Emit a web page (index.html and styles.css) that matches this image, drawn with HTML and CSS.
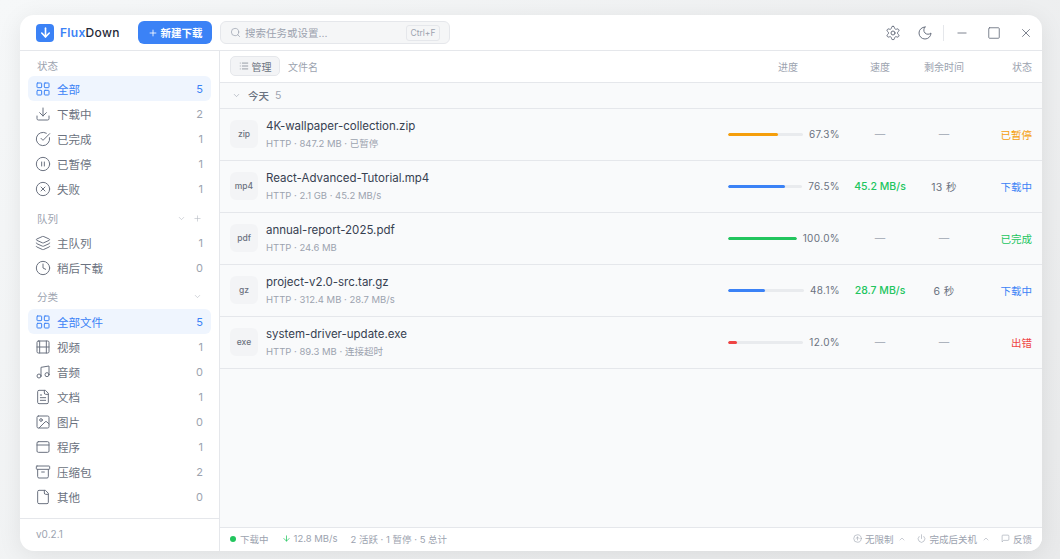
FILE: index.html
```html
<!DOCTYPE html>
<html lang="zh-CN">
<head>
    <meta charset="UTF-8">
    <title>FluxDown</title>
    <link rel="stylesheet" href="styles.css">
</head>
<body>
<svg class="defs" width="0" height="0">
    <symbol id="i-grid" viewBox="0 0 24 24"><rect x="3" y="3" width="7" height="7" rx="1"/><rect x="14" y="3" width="7" height="7" rx="1"/><rect x="14" y="14" width="7" height="7" rx="1"/><rect x="3" y="14" width="7" height="7" rx="1"/></symbol>
    <symbol id="i-down" viewBox="0 0 24 24"><path d="M21 15v4a2 2 0 0 1-2 2H5a2 2 0 0 1-2-2v-4"/><path d="M7 10l5 5 5-5"/><path d="M12 15V3"/></symbol>
    <symbol id="i-check" viewBox="0 0 24 24"><path d="M21.8 10A10 10 0 1 1 17 3.3"/><path d="M9 11l3 3L22 4"/></symbol>
    <symbol id="i-pause" viewBox="0 0 24 24"><circle cx="12" cy="12" r="10"/><path d="M10 15V9"/><path d="M14 15V9"/></symbol>
    <symbol id="i-x" viewBox="0 0 24 24"><circle cx="12" cy="12" r="10"/><path d="M15 9l-6 6"/><path d="M9 9l6 6"/></symbol>
    <symbol id="i-layers" viewBox="0 0 24 24"><path d="M12.8 2.2a2 2 0 0 0-1.6 0L2.6 6.1a1 1 0 0 0 0 1.8l8.6 3.9a2 2 0 0 0 1.6 0l8.6-3.9a1 1 0 0 0 0-1.8z"/><path d="M2 12a1 1 0 0 0 .6.9l8.6 3.9a2 2 0 0 0 1.6 0l8.6-3.9a1 1 0 0 0 .6-.9"/><path d="M2 17a1 1 0 0 0 .6.9l8.6 3.9a2 2 0 0 0 1.6 0l8.6-3.9a1 1 0 0 0 .6-.9"/></symbol>
    <symbol id="i-clock" viewBox="0 0 24 24"><circle cx="12" cy="12" r="10"/><path d="M12 6v6l4 2"/></symbol>
    <symbol id="i-film" viewBox="0 0 24 24"><rect x="3" y="3" width="18" height="18" rx="2"/><path d="M7 3v18"/><path d="M3 12h18"/><path d="M17 3v18"/></symbol>
    <symbol id="i-music" viewBox="0 0 24 24"><path d="M9 18V5l12-2v13"/><circle cx="6" cy="18" r="3"/><circle cx="18" cy="16" r="3"/></symbol>
    <symbol id="i-doc" viewBox="0 0 24 24"><path d="M15 2H6a2 2 0 0 0-2 2v16a2 2 0 0 0 2 2h12a2 2 0 0 0 2-2V7z"/><path d="M14 2v4a2 2 0 0 0 2 2h4"/><path d="M16 13H8"/><path d="M16 17H8"/><path d="M10 9H8"/></symbol>
    <symbol id="i-image" viewBox="0 0 24 24"><rect x="3" y="3" width="18" height="18" rx="2"/><circle cx="9" cy="9" r="2"/><path d="M21 15l-3.1-3.1a2 2 0 0 0-2.8 0L6 21"/></symbol>
    <symbol id="i-app" viewBox="0 0 24 24"><rect x="3" y="4" width="18" height="16" rx="2"/><path d="M3 9h18"/></symbol>
    <symbol id="i-archive" viewBox="0 0 24 24"><rect x="2" y="3" width="20" height="5" rx="1"/><path d="M4 8v11a2 2 0 0 0 2 2h12a2 2 0 0 0 2-2V8"/><path d="M10 12h4"/></symbol>
    <symbol id="i-file" viewBox="0 0 24 24"><path d="M15 2H6a2 2 0 0 0-2 2v16a2 2 0 0 0 2 2h12a2 2 0 0 0 2-2V7z"/><path d="M14 2v4a2 2 0 0 0 2 2h4"/></symbol>
    <symbol id="i-chev" viewBox="0 0 24 24"><path d="M6 9l6 6 6-6"/></symbol>
    <symbol id="i-chev-up" viewBox="0 0 24 24"><path d="M18 15l-6-6-6 6"/></symbol>
    <symbol id="i-plus" viewBox="0 0 24 24"><path d="M5 12h14"/><path d="M12 5v14"/></symbol>
</svg>

<div class="window">
    <header class="titlebar">
        <div class="logo">
            <span class="logo-mark"><svg class="ic" viewBox="0 0 24 24"><path d="M12 4v16"/><path d="M5 13l7 7 7-7"/></svg></span>
            <span class="logo-text"><b>Flux</b>Down</span>
        </div>
        <button class="new-btn"><svg class="ic"><use href="#i-plus"/></svg>新建下载</button>
        <div class="search">
            <svg class="ic" viewBox="0 0 24 24"><circle cx="11" cy="11" r="8"/><path d="M21 21l-4.3-4.3"/></svg>
            <span class="search-text">搜索任务或设置...</span>
            <span class="kbd">Ctrl+F</span>
        </div>
        <div class="win-tools">
            <svg class="ic tool" viewBox="0 0 24 24"><path d="M12.2 2h-.4a2 2 0 0 0-2 2v.2a2 2 0 0 1-1 1.7l-.4.3a2 2 0 0 1-2 0l-.2-.1a2 2 0 0 0-2.7.7l-.2.4a2 2 0 0 0 .7 2.7l.2.1a2 2 0 0 1 1 1.7v.5a2 2 0 0 1-1 1.8l-.2.1a2 2 0 0 0-.7 2.7l.2.4a2 2 0 0 0 2.7.7l.2-.1a2 2 0 0 1 2 0l.4.3a2 2 0 0 1 1 1.7v.2a2 2 0 0 0 2 2h.4a2 2 0 0 0 2-2v-.2a2 2 0 0 1 1-1.7l.4-.3a2 2 0 0 1 2 0l.2.1a2 2 0 0 0 2.7-.7l.2-.4a2 2 0 0 0-.7-2.7l-.2-.1a2 2 0 0 1-1-1.8v-.5a2 2 0 0 1 1-1.7l.2-.1a2 2 0 0 0 .7-2.7l-.2-.4a2 2 0 0 0-2.7-.7l-.2.1a2 2 0 0 1-2 0l-.4-.3a2 2 0 0 1-1-1.7V4a2 2 0 0 0-2-2z"/><circle cx="12" cy="12" r="3"/></svg>
            <svg class="ic tool" viewBox="0 0 24 24"><path d="M12 3a6 6 0 0 0 9 9 9 9 0 1 1-9-9z"/></svg>
            <span class="tool-sep"></span>
            <svg class="ic tool-win" viewBox="0 0 24 24"><path d="M5 12h14"/></svg>
            <svg class="ic tool-win" viewBox="0 0 24 24"><rect x="3" y="3" width="18" height="18" rx="1.5"/></svg>
            <svg class="ic tool-win" viewBox="0 0 24 24"><path d="M18 6L6 18"/><path d="M6 6l12 12"/></svg>
        </div>
    </header>

    <div class="body">
        <aside class="sidebar">
            <div class="side-scroll">
                <div class="side-title">状态</div>
                <a class="side-item active"><svg class="ic"><use href="#i-grid"/></svg><span>全部</span><em>5</em></a>
                <a class="side-item"><svg class="ic"><use href="#i-down"/></svg><span>下载中</span><em>2</em></a>
                <a class="side-item"><svg class="ic"><use href="#i-check"/></svg><span>已完成</span><em>1</em></a>
                <a class="side-item"><svg class="ic"><use href="#i-pause"/></svg><span>已暂停</span><em>1</em></a>
                <a class="side-item"><svg class="ic"><use href="#i-x"/></svg><span>失败</span><em>1</em></a>

                <div class="side-title mid">队列<svg class="ic mini"><use href="#i-chev"/></svg><svg class="ic mini"><use href="#i-plus"/></svg></div>
                <a class="side-item"><svg class="ic"><use href="#i-layers"/></svg><span>主队列</span><em>1</em></a>
                <a class="side-item"><svg class="ic"><use href="#i-clock"/></svg><span>稍后下载</span><em>0</em></a>

                <div class="side-title mid low">分类<svg class="ic mini"><use href="#i-chev"/></svg></div>
                <a class="side-item active"><svg class="ic"><use href="#i-grid"/></svg><span>全部文件</span><em>5</em></a>
                <a class="side-item"><svg class="ic"><use href="#i-film"/></svg><span>视频</span><em>1</em></a>
                <a class="side-item"><svg class="ic"><use href="#i-music"/></svg><span>音频</span><em>0</em></a>
                <a class="side-item"><svg class="ic"><use href="#i-doc"/></svg><span>文档</span><em>1</em></a>
                <a class="side-item"><svg class="ic"><use href="#i-image"/></svg><span>图片</span><em>0</em></a>
                <a class="side-item"><svg class="ic"><use href="#i-app"/></svg><span>程序</span><em>1</em></a>
                <a class="side-item"><svg class="ic"><use href="#i-archive"/></svg><span>压缩包</span><em>2</em></a>
                <a class="side-item"><svg class="ic"><use href="#i-file"/></svg><span>其他</span><em>0</em></a>
            </div>
            <div class="side-foot">v0.2.1</div>
        </aside>

        <main class="main">
            <div class="col-head grid">
                <div class="col-name">
                    <button class="manage"><svg class="ic" viewBox="0 0 24 24"><path d="M3 5h.01"/><path d="M3 12h.01"/><path d="M3 19h.01"/><path d="M8 5h13"/><path d="M8 12h13"/><path d="M8 19h13"/></svg>管理</button>
                    <span>文件名</span>
                </div>
                <div class="center">进度</div>
                <div class="center">速度</div>
                <div class="center">剩余时间</div>
                <div class="right">状态</div>
            </div>

            <div class="group"><svg class="ic"><use href="#i-chev"/></svg><b>今天</b><span>5</span></div>

            <div class="row grid">
                <div class="file"><span class="ext">zip</span><div><div class="fname">4K-wallpaper-collection.zip</div><div class="fmeta">HTTP · 847.2 MB · 已暂停</div></div></div>
                <div class="prog"><div class="bar"><i class="amber" style="width:67.3%"></i></div><span>67.3%</span></div>
                <div class="center dash">—</div>
                <div class="center dash">—</div>
                <div class="right st amber-t">已暂停</div>
            </div>
            <div class="row grid">
                <div class="file"><span class="ext">mp4</span><div><div class="fname">React-Advanced-Tutorial.mp4</div><div class="fmeta">HTTP · 2.1 GB · 45.2 MB/s</div></div></div>
                <div class="prog"><div class="bar"><i class="blue" style="width:76.5%"></i></div><span>76.5%</span></div>
                <div class="center speed">45.2 MB/s</div>
                <div class="center eta">13 秒</div>
                <div class="right st blue-t">下载中</div>
            </div>
            <div class="row grid">
                <div class="file"><span class="ext">pdf</span><div><div class="fname">annual-report-2025.pdf</div><div class="fmeta">HTTP · 24.6 MB</div></div></div>
                <div class="prog"><div class="bar"><i class="green" style="width:100%"></i></div><span>100.0%</span></div>
                <div class="center dash">—</div>
                <div class="center dash">—</div>
                <div class="right st green-t">已完成</div>
            </div>
            <div class="row grid">
                <div class="file"><span class="ext">gz</span><div><div class="fname">project-v2.0-src.tar.gz</div><div class="fmeta">HTTP · 312.4 MB · 28.7 MB/s</div></div></div>
                <div class="prog"><div class="bar"><i class="blue" style="width:48.1%"></i></div><span>48.1%</span></div>
                <div class="center speed">28.7 MB/s</div>
                <div class="center eta">6 秒</div>
                <div class="right st blue-t">下载中</div>
            </div>
            <div class="row grid">
                <div class="file"><span class="ext">exe</span><div><div class="fname">system-driver-update.exe</div><div class="fmeta">HTTP · 89.3 MB · 连接超时</div></div></div>
                <div class="prog"><div class="bar"><i class="red" style="width:12%"></i></div><span>12.0%</span></div>
                <div class="center dash">—</div>
                <div class="center dash">—</div>
                <div class="right st red-t">出错</div>
            </div>

            <footer class="statusbar">
                <span class="dot"></span><span class="sb-state">下载中</span>
                <svg class="ic sb-arrow" viewBox="0 0 24 24"><path d="M12 5v14"/><path d="M19 12l-7 7-7-7"/></svg><span class="sb-speed">12.8 MB/s</span>
                <span class="sb-sum">2 活跃 · 1 暂停 · 5 总计</span>
                <div class="sb-right">
                    <span><svg class="ic" viewBox="0 0 24 24"><circle cx="12" cy="12" r="10"/><path d="M16 12l-4-4-4 4"/><path d="M12 16V8"/></svg>无限制<svg class="ic up"><use href="#i-chev-up"/></svg></span>
                    <span><svg class="ic" viewBox="0 0 24 24"><path d="M12 2v10"/><path d="M18.4 6.6a9 9 0 1 1-12.8 0"/></svg>完成后关机<svg class="ic up"><use href="#i-chev-up"/></svg></span>
                    <span><svg class="ic" viewBox="0 0 24 24"><path d="M21 15a2 2 0 0 1-2 2H7l-4 4V5a2 2 0 0 1 2-2h14a2 2 0 0 1 2 2z"/></svg>反馈</span>
                </div>
            </footer>
        </main>
    </div>
</div>
</body>
</html>
```

FILE: styles.css
```css
* { box-sizing: border-box; }

html, body { height: 100%; }

body {
    margin: 0;
    padding: 15px 18px 8px 20px;
    overflow: hidden;
    background: linear-gradient(135deg, #f6f8f9, #e9eaeb);
    font-family: Inter, "Noto Sans CJK SC", sans-serif;
    color: #374151;
}

.defs { position: absolute; }

.ic {
    width: 14px;
    height: 14px;
    flex: none;
    fill: none;
    stroke: currentColor;
    stroke-width: 2;
    stroke-linecap: round;
    stroke-linejoin: round;
}

.window {
    height: 536px;
    display: flex;
    flex-direction: column;
    background: #fff;
    border-radius: 14px;
    overflow: hidden;
    box-shadow: 0 4px 24px rgba(0, 0, 0, 0.08);
}

/* title bar */
.titlebar {
    height: 36px;
    flex: none;
    display: flex;
    align-items: center;
    padding: 0 9px 0 16px;
    border-bottom: 1px solid #e5e7eb;
}
.logo { display: flex; align-items: center; gap: 6px; width: 102px; }
.logo-mark {
    width: 18px;
    height: 18px;
    border-radius: 4px;
    background: #3b82f6;
    color: #fff;
    display: flex;
    align-items: center;
    justify-content: center;
}
.logo-mark .ic { width: 13px; height: 13px; stroke-width: 3; }
.logo-text { font-size: 12px; font-weight: 500; color: #1f2937; letter-spacing: 0.3px; }
.logo-text b { font-weight: 600; color: #3b82f6; }

.new-btn {
    width: 74px;
    height: 23px;
    border: none;
    border-radius: 6px;
    background: #3b82f6;
    color: #fff;
    font: 600 10.5px Inter, "Noto Sans CJK SC", sans-serif;
    display: flex;
    align-items: center;
    justify-content: center;
    gap: 3px;
    padding: 0;
}
.new-btn .ic { width: 10px; height: 10px; }

.search {
    width: 230px;
    height: 23px;
    margin-left: 8px;
    display: flex;
    align-items: center;
    padding: 0 9px;
    background: #f5f6f7;
    border: 1px solid #e5e7eb;
    border-radius: 6px;
    color: #9ca3af;
}
.search > .ic { width: 11px; height: 11px; stroke-width: 1.6; }
.search-text { flex: 1; margin-left: 4px; font-size: 10.5px; }
.kbd {
    width: 34px;
    height: 16px;
    border: 1px solid #e5e7eb;
    border-radius: 3px;
    font-size: 8.5px;
    text-align: center;
    line-height: 14px;
}

.win-tools { margin-left: auto; display: flex; align-items: center; color: #6b7280; }
.tool { width: 16px; height: 16px; stroke-width: 1.5; margin-right: 16px; }
.tool + .tool { margin-right: 10px; }
.tool-sep { width: 1px; height: 16px; background: #e5e7eb; margin-right: 11px; }
.tool-win { width: 14px; height: 14px; stroke-width: 1.5; margin-right: 18px; }
.tool-win:last-child { margin-right: 0; }

.body { flex: 1; min-height: 0; display: flex; }

/* sidebar */
.sidebar {
    width: 200px;
    flex: none;
    display: flex;
    flex-direction: column;
    border-right: 1px solid #e5e7eb;
}
.side-scroll { flex: 1; padding: 6px 8px 0; }
.side-title {
    height: 16px;
    padding: 0 9px;
    margin-bottom: 3px;
    display: flex;
    align-items: center;
    gap: 7px;
    font-size: 10.5px;
    color: #9ca3af;
}
.side-title.mid { margin-top: 9px; margin-bottom: 4px; }
.side-title.low { margin-top: 8px; margin-bottom: 5px; }
.side-title .mini { width: 9px; height: 9px; stroke-width: 1.6; color: #b6bbc3; }
.side-title .mini:first-of-type { margin-left: auto; }
.side-title .mini + .mini { margin-left: 0; }

.side-item {
    height: 25px;
    padding: 0 8px 0 7px;
    display: flex;
    align-items: center;
    border-radius: 6px;
    font-size: 11.5px;
    color: #6b7280;
}
.side-item .ic { width: 16px; height: 16px; stroke-width: 1.5; }
.side-item span { flex: 1; margin-left: 6px; }
.side-item em { font-style: normal; font-size: 11px; color: #9ca3af; }
.side-item.active { background: #eff5fe; color: #3b82f6; }
.side-item.active em { color: #3b82f6; }

.side-foot {
    height: 33px;
    flex: none;
    padding-left: 16px;
    border-top: 1px solid #e5e7eb;
    font-size: 10px;
    line-height: 30px;
    color: #9ca3af;
}

/* file list */
.main {
    flex: 1;
    min-width: 0;
    display: flex;
    flex-direction: column;
    background: #f9fafb;
}
.grid {
    display: grid;
    grid-template-columns: 1fr 120px 64px 64px 56px;
    align-items: center;
    padding: 0 10px;
}
.center { text-align: center; }
.right { text-align: right; }

.col-head {
    height: 32px;
    flex: none;
    padding-bottom: 1px;
    background: #fff;
    border-bottom: 1px solid #e5e7eb;
    font-size: 10px;
    color: #9ca3af;
}
.col-name { display: flex; align-items: center; gap: 8px; }
.manage {
    width: 50px;
    height: 20px;
    padding: 0;
    border: 1px solid #e5e7eb;
    border-radius: 5px;
    background: #f3f4f6;
    color: #6b7280;
    font: 10px Inter, "Noto Sans CJK SC", sans-serif;
    display: flex;
    align-items: center;
    justify-content: center;
    gap: 3px;
}
.manage .ic { width: 10px; height: 10px; stroke-width: 1.6; }

.group {
    height: 26px;
    flex: none;
    display: flex;
    align-items: center;
    padding-left: 12px;
    border-bottom: 1px solid #e5e7eb;
    font-size: 10.5px;
    color: #9ca3af;
}
.group .ic { width: 9px; height: 9px; stroke-width: 1.6; }
.group b { margin: 0 6px 0 7px; font-weight: 500; color: #6b7280; }

.row {
    height: 52px;
    flex: none;
    padding-bottom: 1px;
    border-bottom: 1px solid #e5e7eb;
}
.file { display: flex; align-items: center; gap: 8px; }
.ext {
    width: 28px;
    height: 28px;
    flex: none;
    border-radius: 6px;
    background: #f3f4f6;
    font-size: 8.5px;
    font-weight: 500;
    line-height: 28px;
    text-align: center;
    color: #6b7280;
}
.fname { font-size: 11.5px; line-height: 16px; color: #374151; }
.fmeta { margin-top: 3px; font-size: 9.5px; line-height: 14px; color: #9ca3af; }

.prog { display: flex; align-items: center; gap: 6px; padding-right: 8px; font-size: 10px; letter-spacing: 0.35px; color: #6b7280; }
.bar { flex: 1; height: 3px; border-radius: 2px; background: #e9ebee; overflow: hidden; }
.bar i { display: block; height: 100%; border-radius: 2px; }
.amber { background: #f59e0b; }
.blue { background: #3b82f6; }
.green { background: #22c55e; }
.red { background: #ef4444; }

.dash { font-size: 10.5px; color: #9ca3af; }
.speed { font-size: 10.5px; font-weight: 500; color: #22c55e; white-space: nowrap; }
.eta { font-size: 10.5px; letter-spacing: 0.3px; color: #6b7280; }
.st { font-size: 10.5px; }
.amber-t { color: #f59e0b; }
.blue-t { color: #3b82f6; }
.green-t { color: #22c55e; }
.red-t { color: #ef4444; }

/* status bar */
.statusbar {
    height: 24px;
    flex: none;
    margin-top: auto;
    display: flex;
    align-items: center;
    padding: 0 10px 2px;
    background: #fff;
    border-top: 1px solid #e5e7eb;
    font-size: 9.5px;
    color: #9ca3af;
}
.dot { width: 6px; height: 6px; border-radius: 50%; background: #22c55e; }
.sb-state { margin-left: 4px; }
.sb-arrow { width: 9px; height: 9px; margin-left: 13px; color: #22c55e; }
.sb-speed { margin-left: 3px; }
.sb-sum { margin-left: 13px; }
.sb-right { margin-left: auto; display: flex; gap: 11px; }
.sb-right span { display: flex; align-items: center; gap: 3px; }
.sb-right .ic { width: 9px; height: 9px; stroke-width: 1.6; }
.sb-right .up { width: 8px; height: 8px; margin-left: 2px; }
```
